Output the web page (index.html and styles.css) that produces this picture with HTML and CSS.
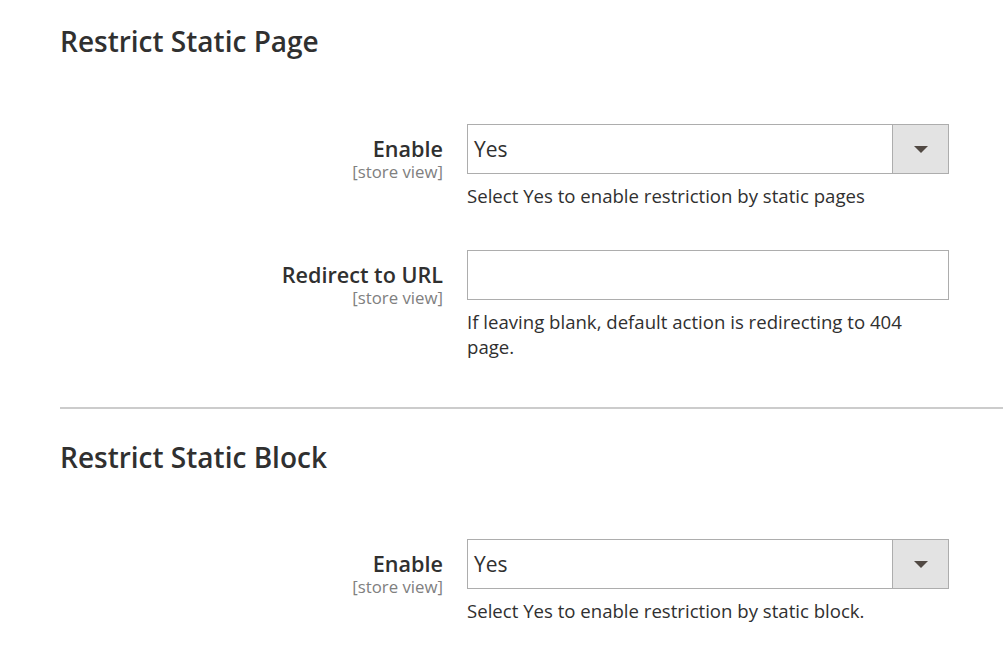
FILE: index.html
```html
<!DOCTYPE html>
<html>
<head>
<meta charset="utf-8">
<link rel="stylesheet" href="styles.css">
</head>
<body>
<div class="page">
  <section class="section">
    <h2 class="section-title">Restrict Static Page</h2>
    <div class="rows">
      <div class="row">
        <div class="label"><span class="label-text">Enable</span><span class="scope">[store view]</span></div>
        <div class="control">
          <div class="select"><span class="select-value">Yes</span><span class="select-btn"><span class="arrow"></span></span></div>
          <p class="note">Select Yes to enable restriction by static pages</p>
        </div>
      </div>
      <div class="row">
        <div class="label"><span class="label-text">Redirect to URL</span><span class="scope">[store view]</span></div>
        <div class="control">
          <div class="input"></div>
          <p class="note">If leaving blank, default action is redirecting to 404 page.</p>
        </div>
      </div>
    </div>
  </section>
  <hr class="divider">
  <section class="section">
    <h2 class="section-title second">Restrict Static Block</h2>
    <div class="rows rows-second">
      <div class="row">
        <div class="label"><span class="label-text">Enable</span><span class="scope">[store view]</span></div>
        <div class="control">
          <div class="select"><span class="select-value">Yes</span><span class="select-btn"><span class="arrow"></span></span></div>
          <p class="note">Select Yes to enable restriction by static block.</p>
        </div>
      </div>
    </div>
  </section>
</div>
</body>
</html>
```

FILE: styles.css
```css
* { box-sizing: border-box; }
html, body { margin: 0; padding: 0; background: #fff; }
body {
  font-family: "Open Sans", "Noto Sans", sans-serif;
  color: #303030;
}
.page {
  padding-left: 60px;
  padding-top: 24px;
}
.section-title {
  margin: 0;
  font-size: 28px;
  font-weight: 600;
  line-height: 34px;
  color: #303030;
}
.rows {
  display: flex;
  flex-direction: column;
  gap: 42px;
  margin-top: 66px;
}
.rows-second {
  margin-top: 65px;
}
.row {
  display: grid;
  grid-template-columns: 383px 482px;
  column-gap: 24px;
}
.label {
  display: flex;
  flex-direction: column;
  align-items: flex-end;
  padding-top: 12px;
}
.label-text {
  font-size: 21.6px;
  font-weight: 600;
  line-height: 26px;
}
.scope {
  font-size: 16.8px;
  line-height: 20px;
  color: #808080;
}
.select, .input {
  height: 50px;
  border: 1px solid #adadad;
  background: #fff;
}
.select {
  display: flex;
  align-items: stretch;
}
.select-value {
  flex: 1;
  font-size: 21px;
  line-height: 48px;
  padding-left: 6px;
  color: #303030;
}
.select-btn {
  width: 56px;
  background: #e3e3e3;
  border-left: 1px solid #adadad;
  display: flex;
  align-items: center;
  justify-content: center;
}
.arrow {
  width: 0;
  height: 0;
  border-left: 7px solid transparent;
  border-right: 7px solid transparent;
  border-top: 7px solid #514943;
}
.note {
  margin: 9px 0 0;
  font-size: 18.6px;
  line-height: 25px;
  color: #303030;
}
.divider {
  border: 0;
  height: 2px;
  background: #cccccc;
  margin: 48px 0 0;
}
.second {
  margin-top: 31px;
}
```
